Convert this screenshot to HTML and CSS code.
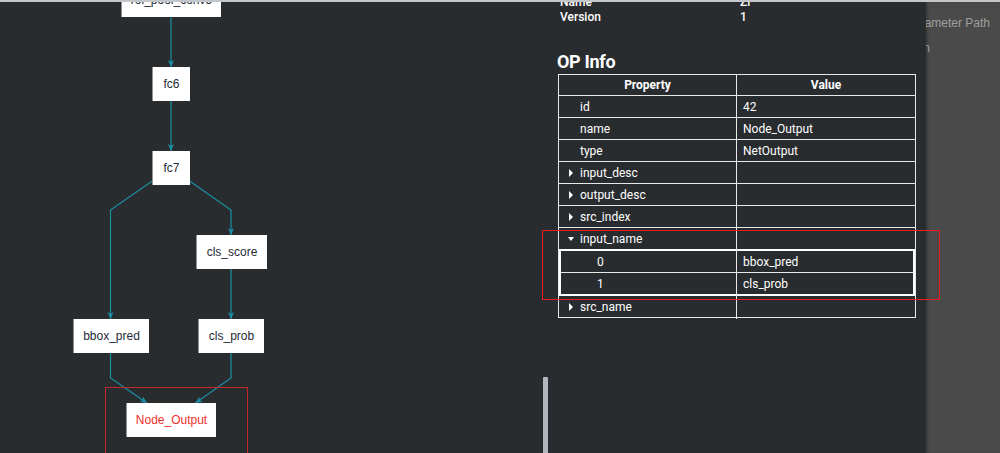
FILE: index.html
```html
<!DOCTYPE html>
<html>
<head>
<meta charset="utf-8">
<link rel="stylesheet" href="styles.css">
</head>
<body>
<div class="topbar"></div>
<div class="main">
  <div class="graph">
    <svg class="edges" width="540" height="451" viewBox="0 0 540 451">
      <defs>
        <marker id="arr" viewBox="0 0 10 10" refX="10" refY="5" markerWidth="7" markerHeight="7" orient="auto" markerUnits="userSpaceOnUse">
          <path d="M0,0.5 L10,5 L0,9.5 L3,5 z" fill="#1b8fa4"/>
        </marker>
      </defs>
      <g fill="none" stroke="#1b8fa4" stroke-width="1.2">
        <path d="M171,15 L171,65" marker-end="url(#arr)"/>
        <path d="M171,99 L171,149" marker-end="url(#arr)"/>
        <path d="M171,166 L110.5,208 L110.5,317" marker-end="url(#arr)"/>
        <path d="M171,166 L231,208 L231,233" marker-end="url(#arr)"/>
        <path d="M231,267 L231,317" marker-end="url(#arr)"/>
        <path d="M110.5,351 L110.5,376 L147,401" marker-end="url(#arr)"/>
        <path d="M231,351 L231,376 L195.5,401" marker-end="url(#arr)"/>
      </g>
    </svg>
    <div class="node n-roi">roi_pool_conv5</div>
    <div class="node n-fc6">fc6</div>
    <div class="node n-fc7">fc7</div>
    <div class="node n-score">cls_score</div>
    <div class="node n-bbox">bbox_pred</div>
    <div class="node n-prob">cls_prob</div>
    <div class="focus"></div>
    <div class="node n-out">Node_Output</div>
  </div>

  <div class="info">
    <div class="meta">
      <div class="meta-row"><span class="meta-label">Name</span><span class="meta-value">Zl</span></div>
      <div class="meta-row"><span class="meta-label">Version</span><span class="meta-value">1</span></div>
    </div>
    <h2 class="section-title">OP Info</h2>
    <div class="optable">
      <div class="row head"><div class="c1">Property</div><div class="c2">Value</div></div>
      <div class="row"><div class="c1">id</div><div class="c2">42</div></div>
      <div class="row"><div class="c1">name</div><div class="c2">Node_Output</div></div>
      <div class="row"><div class="c1">type</div><div class="c2">NetOutput</div></div>
      <div class="row"><div class="c1 tri-cell"><span class="tri right"></span>input_desc</div><div class="c2"></div></div>
      <div class="row"><div class="c1 tri-cell"><span class="tri right"></span>output_desc</div><div class="c2"></div></div>
      <div class="row"><div class="c1 tri-cell"><span class="tri right"></span>src_index</div><div class="c2"></div></div>
      <div class="row open"><div class="c1 tri-cell down-cell"><span class="tri down"></span>input_name</div><div class="c2"></div></div>
      <div class="group">
        <div class="row sub"><div class="c1">0</div><div class="c2">bbox_pred</div></div>
        <div class="row sub last"><div class="c1">1</div><div class="c2">cls_prob</div></div>
      </div>
      <div class="row last"><div class="c1 tri-cell"><span class="tri right"></span>src_name</div><div class="c2"></div></div>
    </div>
    <div class="scrollbar"></div>
  </div>

  <div class="side">
    <div class="side-inner">
      <div class="side-item">Parameter Path</div>
      <div class="side-item">Plan</div>
    </div>
  </div>

  <div class="highlight"></div>
</div>
</body>
</html>
```

FILE: styles.css
```css
html, body {
  margin: 0;
  padding: 0;
}

body {
  width: 1000px;
  height: 453px;
  overflow: hidden;
  background: #292c2f;
  font-family: Roboto, "Liberation Sans", Arial, sans-serif;
}

.topbar {
  height: 2px;
  background: #c3c7cb;
}

.main {
  display: flex;
  height: 451px;
  position: relative;
}

/* ---------- graph canvas ---------- */
.graph {
  width: 540px;
  flex: none;
  position: relative;
  overflow: hidden;
  background: #292c2f;
}

.edges {
  position: absolute;
  left: 0;
  top: 0;
}

.node {
  position: absolute;
  height: 34px;
  box-sizing: border-box;
  background: #ffffff;
  border-left: 1px solid #8f9396;
  display: flex;
  align-items: center;
  justify-content: center;
  font-family: "Liberation Sans", Arial, sans-serif;
  font-size: 12px;
  color: #1e2a36;
  white-space: nowrap;
}

.n-roi { left: 121px; top: -19px; width: 100px; }
.n-fc6 { left: 152px; top: 65px; width: 38px; }
.n-fc7 { left: 152px; top: 149px; width: 38px; }
.n-score { left: 196px; top: 233px; width: 71px; }
.n-bbox { left: 73px; top: 317px; width: 76px; }
.n-prob { left: 198px; top: 317px; width: 66px; }
.n-out { left: 126px; top: 401px; width: 90px; color: #f2302a; }

.focus {
  position: absolute;
  left: 105px;
  top: 385px;
  width: 143px;
  height: 90px;
  box-sizing: border-box;
  border: 1px solid #c4262a;
}

/* ---------- info panel ---------- */
.info {
  width: 386px;
  flex: none;
  position: relative;
  box-sizing: border-box;
  padding-left: 18px;
  overflow: hidden;
  color: #ffffff;
}

.meta {
  margin-top: -7px;
}

.meta-row {
  display: flex;
  height: 15px;
  line-height: 15px;
  font-size: 12px;
  font-weight: 500;
}

.meta-label {
  width: 180px;
  padding-left: 2px;
}

.section-title {
  margin: 26px 0 1px -1px;
  font-size: 18px;
  line-height: 22px;
  font-weight: 700;
  letter-spacing: -0.3px;
}

.optable {
  width: 358px;
  box-sizing: border-box;
  border: 1px solid #e8e8e8;
  font-size: 12px;
}

.row {
  display: grid;
  grid-template-columns: 178px 1fr;
  height: 22px;
  line-height: 23px;
  box-sizing: border-box;
  border-bottom: 1px solid #e8e8e8;
  white-space: nowrap;
}

.c1 {
  border-right: 1px solid #e8e8e8;
  padding-left: 21px;
}

.c2 {
  padding-left: 6px;
}

.row.head {
  height: 21px;
  line-height: 21px;
  font-weight: 700;
  text-align: center;
}

.row.head .c1,
.row.head .c2 {
  padding-left: 0;
}

.row.open {
  height: 21px;
  border-bottom: 0;
}

.row.last {
  height: 21px;
  border-bottom: 0;
}

.tri-cell {
  padding-left: 10px;
}

.down-cell {
  padding-left: 9px;
}

.tri {
  display: inline-block;
  width: 0;
  height: 0;
  vertical-align: middle;
  position: relative;
  top: -1px;
}

.tri.right {
  border-left: 4px solid #ffffff;
  border-top: 4px solid transparent;
  border-bottom: 4px solid transparent;
  margin-right: 7px;
}

.tri.down {
  border-top: 4px solid #ffffff;
  border-left: 3px solid transparent;
  border-right: 3px solid transparent;
  margin-right: 6px;
}

.group {
  border: 2px solid #ffffff;
}

.row.sub {
  grid-template-columns: 176px 1fr;
}

.row.sub .c1 {
  padding-left: 36px;
}

.scrollbar {
  position: absolute;
  left: 3px;
  top: 375px;
  width: 5px;
  height: 80px;
  background: #b1b5bc;
  border-radius: 1px 1px 0 0;
}

/* ---------- right sidebar ---------- */
.side {
  flex: 1;
  background: #4a4a4a;
  overflow: hidden;
  box-shadow: inset 2px 0 2px rgba(0, 0, 0, 0.18);
}

.side-inner {
  margin-left: -20px;
  padding-top: 14px;
  color: #a0a0a0;
  font-family: "Liberation Sans", Arial, sans-serif;
  font-size: 12px;
  line-height: 14px;
  white-space: nowrap;
}

.side-item + .side-item {
  margin-top: 11px;
}

/* ---------- highlight overlay ---------- */
.highlight {
  position: absolute;
  left: 542px;
  top: 228px;
  width: 398px;
  height: 70px;
  box-sizing: border-box;
  border: 1px solid #ec1b1f;
  pointer-events: none;
}
```
